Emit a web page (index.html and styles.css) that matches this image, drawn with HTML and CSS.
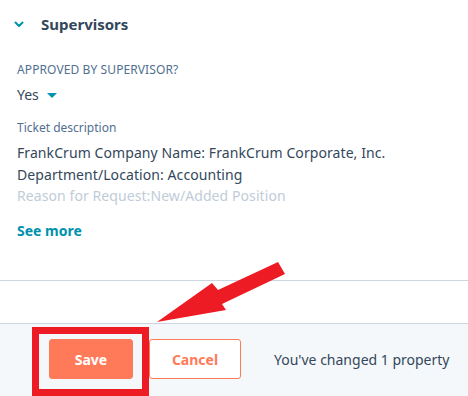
FILE: index.html
```html
<!DOCTYPE html>
<html>
<head>
<meta charset="utf-8">
<link rel="stylesheet" href="styles.css">
</head>
<body>
<div class="page">
  <div class="content">
    <div class="section-head">
      <svg class="chev" width="10" height="7" viewBox="0 0 10 7"><path d="M1.5 1.5 L5 5 L8.5 1.5" fill="none" stroke="#0091ae" stroke-width="2" stroke-linecap="round" stroke-linejoin="round"/></svg>
      <span class="section-title">Supervisors</span>
    </div>
    <div class="field">
      <div class="label upper">APPROVED BY SUPERVISOR?</div>
      <div class="value">Yes <span class="caret"></span></div>
    </div>
    <div class="field desc">
      <div class="label">Ticket description</div>
      <div class="text">FrankCrum Company Name: FrankCrum Corporate, Inc.</div>
      <div class="text">Department/Location: Accounting</div>
      <div class="text faded">Reason for Request:New/Added Position</div>
    </div>
    <div class="see-more">See more</div>
  </div>
  <div class="gap"></div>
  <div class="footer">
    <button class="btn save">Save</button>
    <button class="btn cancel">Cancel</button>
    <span class="changed">You've changed 1 property</span>
  </div>
  <div class="highlight"></div>
  <svg class="arrow" width="468" height="396" viewBox="0 0 468 396">
    <polygon points="157,322 212,283 218,290 278,262 285,274 222,304 226,310" fill="#ed1c24"/>
  </svg>
</div>
</body>
</html>
```

FILE: styles.css
```css
* { box-sizing: border-box; }
html, body { margin: 0; padding: 0; background: #fff; }
body {
  font-family: "Noto Sans", "DejaVu Sans", sans-serif;
  color: #33475b;
  width: 468px;
  height: 396px;
  overflow: hidden;
}
.page { position: relative; width: 468px; height: 396px; display: flex; flex-direction: column; }
.content { padding: 0 0 0 17px; border-bottom: 1px solid #cbd6e2; height: 281px; }
.section-head { display: flex; align-items: center; height: 48px; padding-top: 0; }
.chev { margin-left: -3px; margin-right: 17px; margin-top: 1px; }
.section-title { font-size: 15px; font-weight: 700; color: #33475b; }
.field { margin-top: 13px; }
.label { font-size: 12px; color: #516f90; line-height: 18px; }
.label.upper { letter-spacing: 0.1px; }
.value { font-size: 14px; line-height: 22px; margin-top: 5px; display: flex; align-items: center; }
.caret {
  display: inline-block; width: 0; height: 0; margin-left: 8px; margin-top: 1px;
  border-left: 5px solid transparent; border-right: 5px solid transparent; border-top: 5px solid #0091ae;
}
.field.desc { margin-top: 13px; }
.desc .label { margin-bottom: 5px; }
.text { font-size: 14px; line-height: 21.5px; letter-spacing: 0.08px; }
.text.faded { color: #c0ccd8; }
.see-more { margin-top: 14px; font-size: 14px; font-weight: 700; color: #0091ae; line-height: 20px; }
.gap { height: 43px; border-bottom: 1px solid #cbd6e2; }
.footer {
  flex: 1; background: #f5f8fa; display: flex; align-items: center;
  padding-left: 49px; padding-bottom: 2px;
}
.btn {
  height: 40px; border-radius: 3px; font-family: inherit; font-size: 14px; font-weight: 700;
  border: 1px solid #ff7a59; padding: 0;
}
.save { width: 84px; background: #ff7a59; color: #fff; }
.cancel { width: 92px; margin-left: 16px; background: #fff; color: #ff7a59; }
.changed { margin-left: 33px; font-size: 14px; color: #33475b; }
.highlight {
  position: absolute; left: 32px; top: 327px; width: 117px; height: 69px;
  border: 7px solid #ed1c24; border-bottom-width: 7px;
}
.arrow { position: absolute; left: 0; top: 0; pointer-events: none; }
```
